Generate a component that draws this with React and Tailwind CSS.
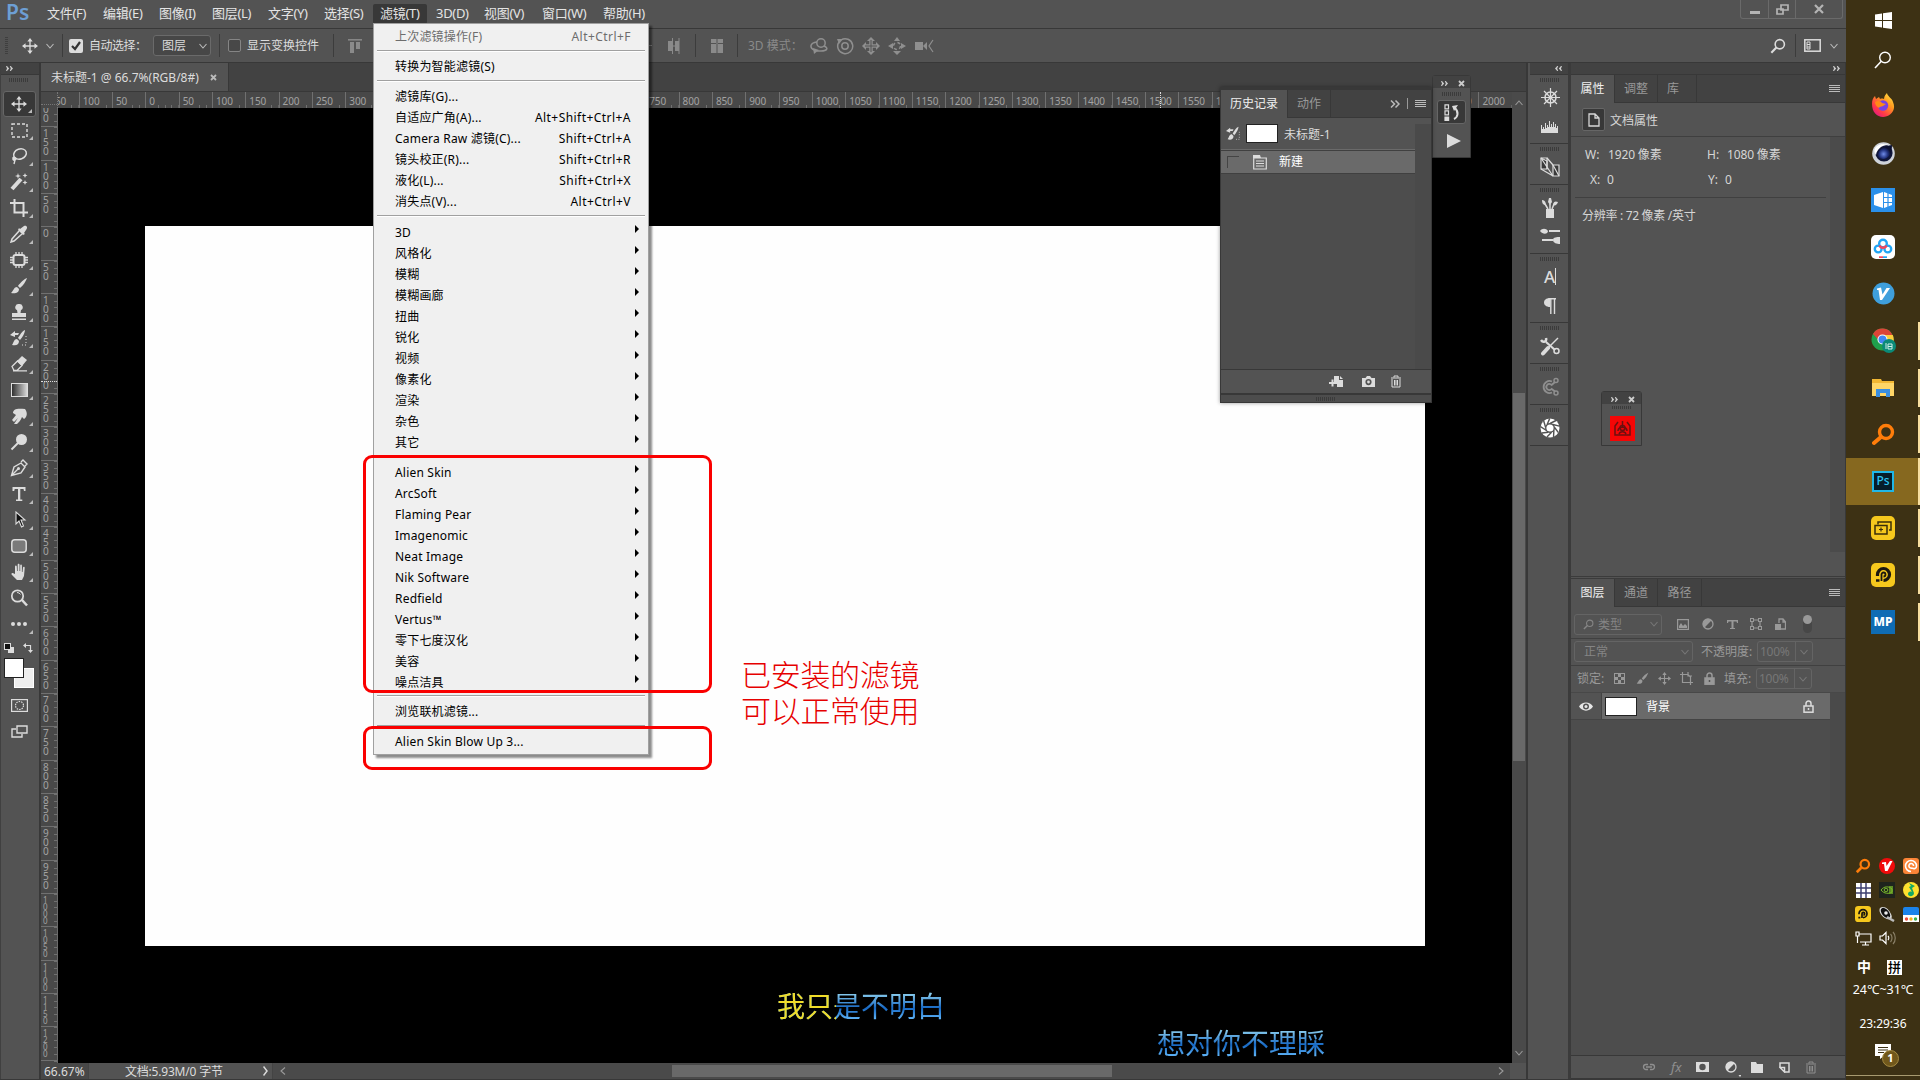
import React from "react";

const Svg = ({ s = 18, w, h, vb, className = "", children }) => (
  <svg
    width={w || s}
    height={h || s}
    viewBox={vb || `0 0 ${w || s} ${h || s}`}
    className={"shrink-0 " + className}
    fill="none"
    stroke="currentColor"
    strokeWidth="1.5"
  >
    {children}
  </svg>
);

const F = { fill: "currentColor", stroke: "none" };

const Move = ({ s = 18 }) => (
  <Svg s={s} vb="0 0 18 18">
    <path d="M9 2v14M2 9h14" />
    <path {...F} d="M9 0l3 4H6zM9 18l3-4H6zM0 9l4-3v6zM18 9l-4-3v6z" />
  </Svg>
);
const Chev = ({ className = "" }) => (
  <Svg w={8} h={6} className={className}>
    <path d="M.5 1l3.500 4L7.500 1" strokeWidth="1.1" />
  </Svg>
);
const Arrows = ({ flip }) => (
  <Svg w={7} h={5} className={flip ? "rotate-180" : ""}>
    <path {...F} d="M0 0h1l2.200 2.500L1 5H0l1-2.500zM3.800 0h1L7 2.500 4.800 5h-1l1-2.500z" />
  </Svg>
);
const Double = () => (
  <Svg w={10} h={8}>
    <path d="M1 .5L4.500 4 1 7.500M5.500 .5L9 4 5.500 7.500" strokeWidth="1.5" />
  </Svg>
);
const Grip = ({ className = "" }) => (
  <div className={"h-1 w-5 bg-[repeating-linear-gradient(90deg,#3b3b3b_0_1px,transparent_1px_2px)] " + className} />
);
const Burger = () => (
  <Svg w={11} h={9}>
    <path d="M0 1.500h11M0 3.500h11M0 5.500h11M0 7.500h11" strokeWidth="1" />
  </Svg>
);
const Brush = ({ s = 18 }) => (
  <Svg s={s} vb="0 0 18 18">
    <path {...F} d="M17 1c-3 1-7 5-9 8l2 2c3-2 6-7 7-10zM7 10c-3 0-3 3-6 6 4 1 8 0 8-4z" />
  </Svg>
);
const HistBrush = ({ s = 18 }) => (
  <Svg s={s} vb="0 0 18 18">
    <path {...F} d="M15 1c-3 1-5 5-7 8l2 2c2-2 5-7 5-10zM7 10c-3 0-3 3-5 6 4 1 7 0 7-4z" />
    <path {...F} d="M0 6l5-4v2l4 0-1 2H5v2z" />
    <path d="M16 7v9h-5" strokeDasharray="1 2" strokeWidth="1" />
  </Svg>
);
const Lens = ({ s = 18, sw = 1.8 }) => (
  <Svg s={s} vb="0 0 18 18">
    <circle cx="11" cy="7" r="5.2" strokeWidth={sw} />
    <path d="M7.2 10.8L1.5 16.5" strokeWidth={sw + 0.6} />
  </Svg>
);
const Trash = () => (
  <Svg w={12} h={13}>
    <path d="M1 3h10M4 2.500V1h4v1.500M2 4v8h8V4M4.500 5v5.500M6 5v5.500M7.500 5v5.500" strokeWidth="1" />
  </Svg>
);
const Lock = ({ filled }) => (
  <Svg w={11} h={13}>
    <path d="M3 6V3.500a2.500 2.500 0 0 1 5 0V6" />
    <rect x="1" y="6" width="9" height="6.200" fill={filled ? "currentColor" : "none"} />
    <path d="M5.500 8v2" stroke={filled ? "#535353" : "currentColor"} />
  </Svg>
);

const tools = [
  <Move s={16} />,
  <Svg w={17} h={15}><rect x="1" y="1" width="15" height="13" strokeDasharray="3 2" strokeWidth="1.400" /></Svg>,
  <Svg s={18}><ellipse cx="10" cy="7" rx="6.500" ry="5" transform="rotate(-20 10 7)" /><path d="M4 10c-2 1-1 4 1 3s0-3-1-2c1 2 1 4 0 6" /></Svg>,
  <Svg s={18}><path d="M2 16L11 6" strokeWidth="4" /><path {...F} d="M8 0l.7 2.300L11 3l-2.300.7L8 6l-.7-2.300L5 3l2.300-.7zM15 0l.7 1.800L17.500 2.500l-1.800.7L15 5l-.7-1.800-1.800-.7 1.800-.7zM15 7l.7 1.800 1.800.7-1.800.7-.7 1.800-.7-1.800-1.800-.7 1.800-.7z" /></Svg>,
  <Svg s={18}><path d="M0 4h13.500v10M4.500 0v13.500H18M13.500 14v4" strokeWidth="2" /></Svg>,
  <Svg s={18}><path {...F} d="M10 4l4-3c3-1 4 2 2 4l-2 3 1 1-2 1-5-5 1-2z" /><path d="M9 6l-7 8-1 3 3-1 8-7" /></Svg>,
  <Svg s={18}><rect x="3.500" y="4" width="11" height="10" rx="2" strokeWidth="2" /><path d="M6 1v3M9 1v3M12 1v3M6 14v3M9 14v3M12 14v3M0 6.500h3M0 9h3M0 11.500h3M15 6.500h3M15 9h3M15 11.500h3" strokeWidth="1.300" /></Svg>,
  <Brush />,
  <Svg s={18}><path {...F} d="M9 1a3.200 3.200 0 0 1 2 6l-.5 3H16v4H2v-4h5.500L7 7a3.200 3.200 0 0 1 2-6zM2 15.500h14V17H2z" /></Svg>,
  <HistBrush />,
  <Svg s={18}><path {...F} d="M7 6l5-5 5 4-5 6z" /><path d="M2 11.500L7.500 6l4.500 4.500-5 5H4z M3 15.800h14" strokeWidth="1.300" /></Svg>,
  <svg width="17" height="14" viewBox="0 0 17 14"><defs><linearGradient id="gt"><stop stopColor="#2a2a2a" /><stop offset="1" stopColor="#ddd" /></linearGradient></defs><rect x=".5" y=".5" width="16" height="13" fill="url(#gt)" stroke="#ddd" /></svg>,
  <Svg s={18}><path {...F} d="M3 6c0-4 4-5 12-4 3 4 2 8-1 10l-2-2c-1 3-3 5-5 7l-3 0 4-6-4 4-2-2 4-5z" /></Svg>,
  <Svg s={18}><circle cx="11.500" cy="6.500" r="5.500" {...F} /><path d="M8 10l-6.500 6.500" strokeWidth="2" /></Svg>,
  <Svg s={18}><path d="M1.500 16.500L4 8l7-4 4 4-4 6zM2 16l6-6M11 3l2-2 4 4-2 2" strokeWidth="1.400" /><circle cx="8.500" cy="9.500" r="1.500" {...F} /></Svg>,
  <Svg s={18}><path {...F} d="M2.500 2h13v4h-1.500l-.5-2h-3.200v10.500h2V16H6v-1.500h2V4H4.700l-.5 2H2.500z" /></Svg>,
  <Svg s={18}><path d="M6 1v12l3-3 2.500 6 2-1L11 9h4z" fill="#111" strokeWidth="1.100" /></Svg>,
  <Svg w={16} h={14}><rect x=".8" y=".8" width="14.400" height="12.400" rx="3" fill="#7a7a7a" /></Svg>,
  <Svg s={18}><path {...F} d="M5 11V3.500c0-1.300 1.700-1.300 1.800 0L7 8h.7V1.800c0-1.400 1.800-1.400 1.800 0V8h.7V2.500c0-1.300 1.700-1.300 1.700 0V9h.6l.5-4.500c.2-1.200 1.700-1 1.700.2L14 13l-2 4H7l-5-5c-1.500-1.500.3-2.600 1.300-1.800z" /></Svg>,
  <Svg s={18}><circle cx="7.500" cy="7" r="5.700" strokeWidth="1.700" /><path d="M12 11l5 5.500" strokeWidth="2.500" /><path d="M7 3.500a4 4 0 0 1 3.500 2" strokeWidth="1" /></Svg>,
  <Svg w={16} h={4}><circle cx="2" cy="2" r="2" {...F} /><circle cx="8" cy="2" r="2" {...F} /><circle cx="14" cy="2" r="2" {...F} /></Svg>,
];

const menus = [
  ["文件(F)", "w-14"], ["编辑(E)", "w-14"], ["图像(I)", "w-[53px]"], ["图层(L)", "w-14"],
  ["文字(Y)", "w-14"], ["选择(S)", "w-14"], ["滤镜(T)", "w-14"], ["3D(D)", "w-12"],
  ["视图(V)", "w-[58px]"], ["窗口(W)", "w-[61px]"], ["帮助(H)", "w-14"],
];

const MenuItem = ({ label, keys, arrow, dim }) => (
  <div className={"flex h-[21px] items-center pl-[21px] pr-[9px] tracking-[0.2px] " + (arrow ? "pt-[2px] " : "") + (dim ? "text-[#6d6d6d]" : "text-black")}>
    <span className="flex-1 whitespace-nowrap">{label}</span>
    {keys && <span className="mr-[8px] whitespace-nowrap tracking-[0.45px]">{keys}</span>}
    {arrow && <svg width="4" height="8" className="mb-[8px]"><path d="M0 0l4 4-4 4z" fill="#000" /></svg>}
  </div>
);
const Sep = () => (
  <div className="h-[9px] px-[3px] pt-[3px]">
    <div className="h-[2px] border-t border-[#a0a0a0] bg-white" />
  </div>
);

const FilterMenu = () => (
  <div className="absolute left-[373px] top-[23px] h-[732px] w-[276px] border border-[#a0a0a0] bg-[#f0f0f0] py-[2px] text-[12px] shadow-[3px_3px_2px_rgba(0,0,0,0.45)]">
    <MenuItem label="上次滤镜操作(F)" keys="Alt+Ctrl+F" dim />
    <Sep />
    <MenuItem label="转换为智能滤镜(S)" />
    <Sep />
    <MenuItem label="滤镜库(G)..." />
    <MenuItem label="自适应广角(A)..." keys="Alt+Shift+Ctrl+A" />
    <MenuItem label="Camera Raw 滤镜(C)..." keys="Shift+Ctrl+A" />
    <MenuItem label="镜头校正(R)..." keys="Shift+Ctrl+R" />
    <MenuItem label="液化(L)..." keys="Shift+Ctrl+X" />
    <MenuItem label="消失点(V)..." keys="Alt+Ctrl+V" />
    <Sep />
    {["3D", "风格化", "模糊", "模糊画廊", "扭曲", "锐化", "视频", "像素化", "渲染", "杂色", "其它"].map((t) => (
      <MenuItem key={t} label={t} arrow />
    ))}
    <Sep />
    {["Alien Skin", "ArcSoft", "Flaming Pear", "Imagenomic", "Neat Image", "Nik Software", "Redfield", "Vertus™", "零下七度汉化", "美容", "噪点洁具"].map((t) => (
      <MenuItem key={t} label={t} arrow />
    ))}
    <Sep />
    <MenuItem label="浏览联机滤镜..." />
    <Sep />
    <MenuItem label="Alien Skin Blow Up 3..." />
  </div>
);

const VSep = ({ className = "" }) => <div className={"h-[23px] w-px bg-[#3c3c3c] " + className} />;

const OptionsBar = () => (
  <div className="flex h-[34px] items-center border-b border-[#383838] text-[12px] text-[#dcdcdc]">
    <div className="ml-[5px] h-[18px] w-[3px] bg-[repeating-linear-gradient(180deg,#3f3f3f_0_1px,transparent_1px_2px)]" />
    <div className="ml-[14px] flex w-[17px]"><Move s={16} /></div>
    <Chev className="ml-[7px] text-[#bbb]" />
    <VSep className="ml-[8px]" />
    <div className="ml-[6px] flex h-[14px] w-[14px] items-center justify-center rounded-[2px] bg-[#dcdcdc] text-[#333]">
      <Svg s={10}><path d="M1 5l3 3 5-7" strokeWidth="2.200" /></Svg>
    </div>
    <span className="ml-[6px] w-[64px] whitespace-nowrap tracking-[-0.5px]">自动选择：</span>
    <div className="flex h-[21px] w-[58px] items-center justify-between rounded-[3px] border border-[#6a6a6a] bg-[#474747] pl-2 pr-[3px]">
      图层 <Chev className="text-[#bbb]" />
    </div>
    <VSep className="ml-[8px]" />
    <div className="ml-[8px] h-[13px] w-[13px] rounded-[2px] border border-[#858585] bg-[#484848]" />
    <span className="ml-[6px] w-[73px] whitespace-nowrap">显示变换控件</span>
    <VSep className="ml-[13px]" />
    <Svg s={14} className="ml-[14px] text-[#8a8a8a]"><path d="M0 .8h14" /><path {...F} d="M2 3h4v11H2zM8 3h4v7H8z" /></Svg>
    <div className="ml-[286px] flex w-[20px] text-[#8a8a8a]"><span className="h-px w-1 bg-[#8a8a8a]" /></div>
    <Svg w={12} h={16} className="text-[#8a8a8a]"><path {...F} d="M0 3h4v10H0zM7 3h4v10H7z" /><path d="M5 8h2M4.500 0v16M11 0v16" strokeWidth="1" /></Svg>
    <VSep className="ml-[15px]" />
    <Svg w={12} h={14} className="ml-[15px] text-[#8a8a8a]"><path {...F} d="M0 0h5v4H0zM0 5h5v9H0zM7 0h5v4H7zM7 5h5v9H7z" /><path d="M6 0v14" strokeWidth="1" /></Svg>
    <VSep className="ml-[14px]" />
    <span className="ml-[10px] w-[62px] whitespace-nowrap text-[#8a8a8a]">3D 模式：</span>
    <div className="flex gap-[8px] text-[#8f8f8f]">
      <Svg s={18}><circle cx="11" cy="6" r="4.200" /><path d="M7 5c-8 1-7 6-3 8M14 9c5 2 3 5-3 5H7" /><path {...F} d="M3 11l6 2-5 4z" /></Svg>
      <Svg s={18}><circle cx="9" cy="9" r="3.200" /><path d="M5 3a7.500 7.500 0 1 1-2 2" /><path {...F} d="M1 2l6 0-4 5z" /></Svg>
      <Svg s={18}><path d="M9 2v14M2 9h14" strokeWidth="3.500" /><path {...F} d="M9 0l4 4H5zM9 18l4-4H5zM0 9l4-4v8zM18 9l-4-4v8z" /><path d="M9 3v12M3 9h12" stroke="#535353" strokeWidth="1" /></Svg>
      <Svg s={18}><circle cx="9" cy="9" r="3.500" strokeDasharray="3 2.500" /><path {...F} d="M9 0l3 4H6zM9 18l4-4H5zM0 9l5-3v6zM18 9l-5-3v6z" /></Svg>
      <Svg w={20} h={18}><path {...F} d="M1 5h8v8H1zM9 9l4-4v8z" /><path d="M19 3l-4 6 4 6" strokeWidth="1.200" /></Svg>
    </div>
    <div className="flex-1" />
    <div className="flex items-center pr-[8px] text-[#dcdcdc]">
      <Lens s={16} />
      <VSep className="ml-[9px]" />
      <Svg w={17} h={13} className="ml-[8px]"><rect x=".8" y=".8" width="15.400" height="11.400" /><path d="M6 3v7H3V3zM3 5.500h3M3 8h3" strokeWidth="1" /></Svg>
      <Chev className="ml-[9px] text-[#bbb]" />
    </div>
  </div>
);

const hLabels = Array.from({ length: 44 }, (_, i) => Math.abs(i * 50 - 150));
const vLabels = Array.from({ length: 30 }, (_, i) => Math.abs(i * 50 - 200));

const Doc = () => (
  <div className="flex w-[1489px] flex-col border-l-2 border-r-2 border-[#383838]">
    <div className="flex h-[29px] border-b border-[#383838] bg-[#424242]">
      <div className="flex w-[188px] items-center border-r border-[#383838] bg-[#535353] pl-[10px] text-[12px] text-[#dcdcdc]">
        <span className="w-[154px] whitespace-nowrap pt-[1px]">未标题-1 @ 66.7%(RGB/8#)</span>
        <Svg s={7} className="ml-[5px] text-[#bbb]"><path d="M1 1l5 5M6 1L1 6" strokeWidth="1.800" /></Svg>
      </div>
    </div>
    <div className="flex min-h-0 flex-1">
      <div className="flex w-[1471px] flex-col">
        <div className="flex h-4 bg-[#484848]">
          <div className="w-[17px] shrink-0 border-r border-dotted border-[#777]">
            <div className="mt-3 border-t border-dotted border-[#777]" />
          </div>
          <div className="relative flex flex-1 overflow-hidden">
            <div className="-ml-[12.700px] flex">
              {hLabels.map((n, i) => (
                <div key={i} className="flex h-4 w-[33.333px] shrink-0 items-end border-l border-[#707070] bg-[repeating-linear-gradient(90deg,transparent_0_5.667px,#707070_5.667px_6.667px)] bg-[length:100%_3px] bg-bottom bg-no-repeat">
                  <span className="ml-[3px] bg-[#484848] pr-[1px] text-[10px] leading-[13px] tracking-[-0.1px] text-[#a2a2a2]">{n}</span>
                </div>
              ))}
            </div>
            <div className="absolute left-[1102px] top-0 h-4 border-l border-dotted border-[#ddd]" />
          </div>
        </div>
        <div className="flex min-h-0 flex-1">
          <div className="relative w-[17px] shrink-0 overflow-hidden border-r border-[#6a6a6a] bg-[#484848]">
            <div className="-mt-[15px]">
              {vLabels.map((n, i) => (
                <div key={i} className="flex h-[33.333px] justify-between border-t border-[#707070]">
                  <div className={n > 999
                    ? "flex flex-col pl-[2px] pt-[2px] text-[8px] leading-[7px] text-[#a2a2a2]"
                    : "flex flex-col pl-[2px] pt-[2px] text-[10px] leading-[9px] text-[#a2a2a2]"}>
                    {String(n).split("").map((c, k) => <span key={k}>{c}</span>)}
                  </div>
                  <div className="h-full w-[3px] bg-[repeating-linear-gradient(180deg,#707070_0_1px,transparent_1px_6.667px)]" />
                </div>
              ))}
            </div>
            <div className="absolute left-0 top-[273px] w-4 border-t border-dotted border-[#ddd]" />
          </div>
          <div className="min-w-0 flex-1 bg-black pl-[87px] pt-[118px]">
            <div className="h-[720px] w-[1280px] bg-[#fefefe]" />
          </div>
        </div>
      </div>
      <div className="flex w-4 flex-col items-center bg-[#4a4a4a] text-[#999]">
        <Chev className="ml-[1px] mt-[8px] rotate-180" />
        <div className="mt-[287px] h-[368px] w-3 bg-[#696969]" />
        <div className="flex-1" />
        <Chev className="mb-[7px] ml-[1px]" />
      </div>
    </div>
    <div className="flex h-4 items-center bg-[#535353] text-[12px] leading-[15px] text-[#dcdcdc]">
      <div className="flex h-4 w-[48px] items-center border-r border-[#444] bg-[#484848] pl-[3px] text-[12px]">66.67%</div>
      <div className="flex h-4 w-[184px] items-center border-r border-[#444] pl-[36px]">
        <span className="flex-1 whitespace-nowrap tracking-[-0.2px]">文档:5.93M/0 字节</span>
        <Svg w={5} h={10} className="mr-[4px]"><path d="M.5.5L4 5 .5 9.500" /></Svg>
      </div>
      <div className="flex h-4 flex-1 items-center bg-[#4a4a4a] text-[#999]">
        <Chev className="ml-[6px] rotate-90" />
        <div className="ml-[385px] h-3 w-[440px] bg-[#696969]" />
        <div className="flex-1" />
        <Chev className="mr-[5px] -rotate-90" />
        <div className="h-4 w-4 bg-[#535353]" />
      </div>
    </div>
  </div>
);

const sideGroups = [
  ["h-[69px]", [
    <Svg s={19}><circle cx="9.500" cy="9.500" r="5.500" /><circle cx="9.500" cy="9.500" r="1.800" {...F} /><path d="M9.500 0v19M0 9.500h19M3 3l13 13M16 3L3 16" strokeWidth="1.200" /></Svg>,
    <Svg w={18} h={12}><path {...F} d="M0 12V4h1v4h1V6h1v2h1V2h1v5h1V4h1v2h1V0h1v6h1V3h1v3h1V1h1v5h1V3h1v4h1V5h1v7z" /></Svg>]],
  ["h-[41px]", [
    <Svg s={20}><path fill="#3a3a3a" d="M1 1h6v11H1zM13 8h6v11h-6z" strokeWidth="1.200" /><path d="M1 1l12 18M7 1l6 7M1 12l12 7M13 8l6 11M1 1l6 3v8" strokeWidth="1.200" /></Svg>]],
  ["h-[69px]", [
    <Svg s={20}><path {...F} d="M6 11h8v9H6zM2 2c3 0 4 3 4 5C3 7 2 5 2 2zM9 0h2l1 4-2 3-2-3zM13 6c1-3 3-3 5-2-1 3-3 4-5 3z" /><path d="M5 6l3 5M10 6v5M14 6l-2 5" /></Svg>,
    <Svg w={20} h={17}><path {...F} d="M0 3c2-3 6-3 8 0 0 3-5 4-8 0zM20 9v7c-3 0-7-1-7-4s4-3 7-3z" /><path d="M9 3h11M2 12h11" strokeWidth="2" /></Svg>]],
  ["h-[69px]", [
    <div className="flex items-center text-[17px] font-medium leading-none"><span>A</span><span className="h-[17px] w-px bg-[#ddd]" /></div>,
    <Svg w={12} h={16}><path {...F} d="M6 0h6v1.500H6zM6 0v9C-2 9-2 0 6 0z" /><path d="M6.800 0v16M10.500 0v16" strokeWidth="1.400" /></Svg>]],
  ["h-[41px]", [
    <Svg s={20}><path d="M18 2L8 12" /><path d="M8 12l-5 5.500" strokeWidth="4" strokeLinecap="round" /><path d="M6 6l9 8" strokeWidth="2.200" /><path d="M1 4c2 3 6 2 5-2" strokeWidth="2.500" /><circle cx="16.500" cy="15" r="2.500" /></Svg>]],
  ["h-[41px]", [
    <Svg s={19} className="text-[#8f8f8f]"><path d="M11 4.500A6 6 0 1 0 11 15.500M10 7.500a3 3 0 1 0 0 5M10 8.500l4-3.500M10 11.500l4 3" strokeWidth="1.800" /><circle cx="15" cy="3.500" r="2" /><circle cx="15" cy="16" r="2" /></Svg>]],
  ["h-[41px]", [
    <Svg s={20} className="text-white">
      <circle cx="10" cy="10" r="9.500" {...F} />
      <g stroke="#535353" strokeWidth="1.400">
        {[0, 40, 80, 120, 160, 200, 240, 280, 320].map((a) => <path key={a} d="M10 5.500L16 2.500" transform={`rotate(${a} 10 10)`} />)}
        <circle cx="10" cy="10" r="4.300" />
      </g>
    </Svg>]],
];

const SideIcons = () => (
  <div className="flex w-[41px] flex-col border-r-[3px] border-[#3b3b3b] bg-[#535353] text-[#dcdcdc]">
    <div className="flex h-3 items-center justify-end border-b border-[#383838] bg-[#424242] pr-[6px] text-[#ccc]"><Arrows flip /></div>
    {sideGroups.map(([h, icons], i) => (
      <div key={i} className={"flex flex-col items-center border-b border-[#383838] pl-[2px] " + h}>
        <Grip className="mt-[3px] mb-[1px] shrink-0" />
        {icons.map((ic, k) => <div key={k} className="flex h-[29px] shrink-0 items-center justify-center">{ic}</div>)}
      </div>
    ))}
  </div>
);

const Tab = ({ active, w, children }) => (
  <div className={"flex items-center justify-center border-r border-[#383838] text-[12px] " + w + (active ? " bg-[#535353] text-[#f0f0f0]" : " border-b text-[#999]")}>{children}</div>
);

const Field = ({ w, children }) => (
  <div className={"flex h-[21px] items-center rounded-[3px] border border-[#646464] text-[#858585] " + w}>{children}</div>
);
const Percent = () => (
  <Field w="w-[56px]">
    <span className="w-[38px] border-r border-[#646464] pl-[2px] leading-[19px] text-[#777] tracking-[-0.3px]">100%</span>
    <Chev className="ml-[4px] text-[#777]" />
  </Field>
);

const Panels = () => (
  <div className="flex w-[275px] flex-col border-r border-[#383838] bg-[#535353] text-[12px] text-[#d6d6d6]">
    <div className="flex h-3 items-center justify-end border-b border-[#383838] bg-[#424242] pr-[5px] text-[#ccc]"><Arrows /></div>
    <div className="flex h-7 bg-[#424242]">
      <Tab active w="w-[44px]">属性</Tab><Tab w="w-[43px]">调整</Tab><Tab w="w-[39px] pr-2">库</Tab>
      <div className="flex flex-1 items-center justify-end border-b border-[#383838] pr-[5px] text-[#bbb]"><Burger /></div>
    </div>
    <div className="flex h-[34px] items-center border-b border-[#3f3f3f] pl-[11px]">
      <div className="flex h-[23px] w-[23px] items-center justify-center rounded-[2px] border border-[#666] bg-[#383838]">
        <Svg w={12} h={14}><path d="M1 1h6l4 4v8H1zM7 1v4h4" strokeWidth="1.300" /></Svg>
      </div>
      <span className="ml-[5px] pt-[3px]">文档属性</span>
    </div>
    <div className="flex h-[439px]">
      <div className="w-[259px] pl-[4px]">
        <div className="flex h-[61px] w-[251px] flex-col border-b border-[#404040] pt-[5px]">
          <div className="flex h-[25px] items-center pl-[10px]"><span className="w-[23px]">W:</span><span className="w-[99px] tracking-[-0.15px]">1920 像素</span><span className="w-[20px]">H:</span><span className="tracking-[-0.15px]">1080 像素</span></div>
          <div className="flex h-[25px] items-center pl-[15px]"><span className="w-[17px]">X:</span><span className="w-[101px]">0</span><span className="w-[17px]">Y:</span><span>0</span></div>
        </div>
        <div className="pl-[7px] pt-[9px] tracking-[-0.3px]">分辨率 : 72 像素 /英寸</div>
      </div>
      <div className="h-[415px] flex-1 bg-[#4b4b4b]" />
    </div>
    <div className="h-[3px] border-y border-[#3b3b3b]" />
    <div className="flex h-7 bg-[#424242]">
      <Tab active w="w-[44px]">图层</Tab><Tab w="w-[43px]">通道</Tab><Tab w="w-[44px]">路径</Tab>
      <div className="flex flex-1 items-center justify-end border-b border-[#383838] pr-[5px] text-[#bbb]"><Burger /></div>
    </div>
    <div className="flex h-8 items-center border-b border-[#404040] pl-[3px] pt-[3px] text-[#999]">
      <Field w="w-[88px]">
        <span className="flex w-full items-center pl-2"><Lens s={11} /><span className="ml-1 flex-1 pt-[1px]">类型</span><Chev className="mr-[3px] text-[#777]" /></span>
      </Field>
      <div className="ml-[15px] flex items-center">
        <div className="w-[25px]"><Svg w={12} h={11}><rect x=".6" y=".6" width="10.800" height="9.800" strokeWidth="1.200" /><path {...F} d="M2 9V7l2-3 2 3 2-2 2 2v2z" /></Svg></div>
        <div className="w-[25px]"><Svg s={12}><circle cx="6" cy="6" r="5" strokeWidth="1.300" /><path {...F} d="M9.700 2.300a5 5 0 0 0-7.400 7.400z" /></Svg></div>
        <div className="w-[23px]"><Svg w={11} h={11}><path {...F} d="M0 1h11v3h-1L9.500 2.500h-3v6.500H8V10H3V9h1.500V2.500h-3L1 4H0z" /></Svg></div>
        <div className="w-[25px]"><Svg s={12}><path d="M2 2h8v8H2z" strokeWidth="1.200" /><path {...F} d="M0 0h4v4H0zM8 0h4v4H8zM0 8h4v4H0zM8 8h4v4H8z" /><path fill="#535353" stroke="none" d="M1 1h2v2H1zM9 1h2v2H9zM1 9h2v2H1zM9 9h2v2H9z" /></Svg></div>
        <div className="w-[28px]"><Svg w={11} h={12}><path d="M4 5V1h4l2.500 3v7H6M8 1v3h3" strokeWidth="1.300" /><path {...F} d="M0 6h6v6H0z" /></Svg></div>
        <div className="h-[18px] w-[9px] rounded-full bg-[#474747]"><div className="h-[9px] w-[9px] rounded-full bg-[#999]" /></div>
      </div>
    </div>
    <div className="flex h-[27px] items-center border-b border-[#404040] pb-[1px] pl-[3px] text-[#999]">
      <Field w="w-[119px]"><span className="flex-1 pl-[9px] pt-[1px]">正常</span><Chev className="mr-[3px] text-[#777]" /></Field>
      <span className="ml-[8px] w-[56px] whitespace-nowrap pt-[1px]">不透明度:</span>
      <Percent />
    </div>
    <div className="flex h-[27px] items-center border-b border-[#484848] pb-[1px] pl-[6px] text-[#999]">
      <span className="w-[37px]">锁定:</span>
      <div className="w-[22px]"><Svg s={11}><rect x=".5" y=".5" width="10" height="10" strokeWidth="1" /><path {...F} d="M4 1h3v3H4zM1 4h3v3H1zM7 4h3v3H7zM4 7h3v3H4z" /></Svg></div>
      <div className="w-[22px]"><Brush s={13} /></div>
      <div className="w-[22px]"><Move s={13} /></div>
      <div className="w-[24px]"><Svg s={13}><path d="M0 2.500h8l2.500 2.500V13M2.500 0v10.500H13M8 0v4h4" strokeWidth="1.200" /></Svg></div>
      <div className="w-[20px]"><Lock filled /></div>
      <span className="w-[32px] whitespace-nowrap">填充:</span>
      <Percent />
    </div>
    <div className="flex min-h-0 flex-1">
      <div className="w-[259px] bg-[#4d4d4d]">
        <div className="flex h-[27px] border-b border-[#444] bg-[#6a6a6a]">
          <div className="flex w-[31px] items-center justify-center border-r border-[#444] bg-[#535353] text-[#e6e6e6]">
            <Svg w={14} h={9}><path {...F} fillRule="evenodd" d="M0 4.500C3-1 11-1 14 4.500 11 10 3 10 0 4.500zM7 1.500a3 3 0 1 0 0 6 3 3 0 0 0 0-6z" /><circle cx="7" cy="4.500" r="1.500" {...F} /></Svg>
          </div>
          <div className="flex flex-1 items-center pl-[3px] pr-[16px] text-white">
            <div className="h-[19px] w-8 border border-[#222] bg-white" />
            <span className="ml-[9px] flex-1 pt-[2px]">背景</span>
            <span className="text-[#dcdcdc]"><Lock /></span>
          </div>
        </div>
      </div>
      <div className="flex-1 bg-[#4a4a4a]" />
    </div>
    <div className="flex h-6 items-center border-y border-[#383838] pl-[71px] text-[#dcdcdc]">
      <div className="flex w-[29px] text-[#8f8f8f]"><Svg w={14} h={8}><path d="M6 1.500H4a2.500 2.500 0 0 0 0 5h2M8 1.500h2a2.500 2.500 0 0 1 0 5H8M4 4h6" strokeWidth="1.300" /></Svg></div>
      <div className="w-[25px] text-[13px] italic leading-none text-[#8f8f8f]">fx</div>
      <div className="flex w-[29px]"><Svg w={13} h={10}><path {...F} fillRule="evenodd" d="M0 0h13v10H0zM6.500 1.800a3.200 3.200 0 1 0 0 6.400 3.200 3.200 0 0 0 0-6.400z" /></Svg></div>
      <div className="flex w-[26px]"><Svg w={16} h={20} className="-mr-1"><circle cx="6" cy="10" r="5" strokeWidth="1.300" /><path {...F} d="M9.700 6.300a5 5 0 0 0-7.400 7.400zM13.500 18h3l-1.500 2z" /></Svg></div>
      <div className="flex w-[28px]"><Svg w={12} h={11}><path {...F} d="M0 0h5l1 2h6v9H0z" /></Svg></div>
      <div className="flex w-[26px]"><Svg s={11}><path d="M1 6V1h9v9H6M1 5.500h4.500V10z" strokeWidth="1.500" /></Svg></div>
      <div className="flex text-[#8f8f8f]"><Trash /></div>
    </div>
  </div>
);

const HistoryPanel = () => (
  <div className="absolute left-[1220px] top-[87px] flex h-[316px] w-[212px] flex-col border border-t-[3px] border-[#383838] bg-[#4d4d4d] text-[12px] text-[#dcdcdc] shadow-[0_0_4px_rgba(0,0,0,0.4)]">
    <div className="flex h-7 shrink-0 bg-[#424242]">
      <Tab active w="w-[67px]">历史记录</Tab><Tab w="w-[43px]">动作</Tab>
      <div className="flex flex-1 items-center justify-end gap-[7px] border-b border-[#383838] pr-[5px] text-[#bbb]">
        <Double /><span className="h-[11px] w-px bg-[#999]" /><Burger />
      </div>
    </div>
    <div className="flex min-h-0 flex-1">
      <div className="flex-1">
        <div className="flex h-[32px] items-center border-b border-[#6a6a6a] bg-[#535353] pl-[5px]">
          <HistBrush s={15} />
          <div className="ml-[5px] h-[19px] w-8 border border-[#222] bg-white" />
          <span className="ml-[6px] pt-[2px]">未标题-1</span>
        </div>
        <div className="flex h-[24px] items-center border-y border-[#404040] bg-[#6a6a6a] pl-[6px] text-white">
          <div className="h-3 w-3 border-l border-t border-[#444]" />
          <Svg w={14} h={15} className="ml-[14px] text-[#dcdcdc]"><path d="M.7 3h12.600v11H.7zM3 6h8M3 8.500h8M3 11h8" strokeWidth="1.200" /><path {...F} d="M0 0h7l1 3H0z" /></Svg>
          <span className="ml-[12px]">新建</span>
        </div>
      </div>
      <div className="w-4 border-t-[6px] border-[#535353] bg-[#4a4a4a]" />
    </div>
    <div className="flex h-[26px] shrink-0 items-center border-b-2 border-t border-[#383838] bg-[#535353] pl-[108px]">
      <Svg w={14} h={12}><path {...F} d="M5 0h5v4h4v7H8V8H5z" /><path d="M0 7h7M3.500 3.500v7" strokeWidth="2" /><path {...F} d="M11 0l3 3h-3z" /></Svg>
      <Svg w={13} h={11} className="ml-[19px]"><path {...F} fillRule="evenodd" d="M0 2h3.500L5 0h3l1.500 2H13v9H0zM6.500 3a3 3 0 1 0 0 6.200 3 3 0 0 0 0-6.200z" /><circle cx="6.500" cy="6" r="1.400" {...F} /></Svg>
      <span className="ml-[15px]"><Trash /></span>
    </div>
    <div className="flex h-[7px] shrink-0 items-center justify-center bg-[#4d4d4d]"><Grip /></div>
  </div>
);

const MiniDock = () => (
  <div className="absolute left-[1432px] top-[75px] flex h-[83px] w-[39px] flex-col items-center rounded-t-[3px] border border-[#383838] bg-[#535353] text-[#dcdcdc]">
    <div className="flex h-3 w-full shrink-0 items-center justify-between bg-[#424242] pl-[8px] pr-[5px] pt-[2px] text-[#ccc]">
      <Arrows /><Svg s={7}><path d="M1 1l5 5M6 1L1 6" strokeWidth="1.800" /></Svg>
    </div>
    <Grip className="mt-1" />
    <div className="mt-[4px] flex h-6 w-[29px] items-center justify-center rounded-[3px] border border-[#666] bg-[#383838]">
      <Svg w={16} h={17}><path d="M1 .8h3.500v4H1zM1 6.800h3.500v4H1z" strokeWidth="1.200" /><path {...F} d="M.4 12.500H5.200V17H.4z" /><path d="M10 15c4-2 5-7 1-11" strokeWidth="2" /><path {...F} d="M8 2l6-1-4 6z" /></Svg>
    </div>
    <Svg w={14} h={14} className="ml-1 mt-[10px]"><path {...F} d="M0 0l14 7-14 7z" /></Svg>
  </div>
);

const RedDock = () => (
  <div className="absolute left-[1601px] top-[391px] flex h-[55px] w-[41px] flex-col items-center rounded-t-[3px] border border-[#383838] bg-[#535353]">
    <div className="flex h-3 w-full items-center justify-between bg-[#424242] pl-[9px] pr-[6px] pt-[2px] text-[#ccc]">
      <Arrows /><Svg s={7}><path d="M1 1l5 5M6 1L1 6" strokeWidth="1.800" /></Svg>
    </div>
    <div className="mt-[2px] h-[3px] w-5 bg-[repeating-linear-gradient(90deg,#3b3b3b_0_1px,transparent_1px_2px)]" />
    <div className="ml-[1px] mt-[7px] flex h-[25px] w-[25px] items-center justify-center bg-[#f40606] text-[#6a1010]">
      <Svg s={19}><path d="M5 3L2 7v9h15V7l-3-4M9.500 2v6M5 12c0-5 9-5 9 0M6 15c1-3 6-3 7 0" /><circle cx="9.500" cy="9" r="2.500" /></Svg>
    </div>
  </div>
);

const Sq = ({ bg, children }) => <div className={"flex h-6 w-6 items-center justify-center " + bg}>{children}</div>;

const apps = [
  <Svg s={17} className="text-white"><path {...F} d="M0 2.500L7 1.500V8H0zM8 1.300L17 0v8H8zM0 9h7v6.500L0 14.500zM8 9h9v8l-9-1.300z" /></Svg>,
  <span className="text-white"><Svg s={18}><circle cx="11" cy="6.500" r="5.300" strokeWidth="1.400" /><path d="M7.300 10.300L1 17" strokeWidth="1.600" /></Svg></span>,
  <svg width="24" height="24" viewBox="0 0 24 24"><defs><linearGradient id="ff" x1="1" y1="0" x2=".2" y2="1"><stop stopColor="#fff44f" /><stop offset=".4" stopColor="#ff9a1f" /><stop offset=".75" stopColor="#ff3b47" /><stop offset="1" stopColor="#e31587" /></linearGradient></defs><path d="M1 11C1 7 2 5 4 3l1 3 3-2 1 2c2-1 4 0 4 0 0-3 2-5 3-6 0 3 5 5 6 9 4 9-4 15-10 15S1 19 1 11z" fill="url(#ff)" /><circle cx="12" cy="12.500" r="5.200" fill="#7542e5" /><path d="M4 9c3-2 6-1 7 1l4 1-3 2c-2 1-3 0-4 2-2-1-4-3-4-6z" fill="#ff8a16" /></svg>,
  <svg width="23" height="23" viewBox="0 0 23 23"><defs><radialGradient id="c4" cx=".4" cy=".65"><stop stopColor="#6f8be8" /><stop offset=".6" stopColor="#22337f" /><stop offset="1" stopColor="#0a0f30" /></radialGradient></defs><circle cx="11.500" cy="11.500" r="11.300" fill="#cfd3da" /><circle cx="12" cy="11" r="8.600" fill="#10163a" /><path d="M6 13c0-6 7-9 14-10 0 8-3 13-8 14-3 0-6-1-6-4z" fill="url(#c4)" /><path d="M3 6c3-4 9-5 13-3-6 0-11 4-12 10-2-2-2-5-1-7z" fill="#fff" /></svg>,
  <Sq bg="bg-[#2b90ea]"><svg width="18" height="16" viewBox="0 0 18 16"><path d="M0 3l9-3v16l-9-3z" fill="#fff" /><path d="M10 0l8 3v10l-8 3z" fill="#fff" /><path d="M10 5.500h8M10 10.500h8M14 0v16" stroke="#2b90ea" strokeWidth="1.200" /></svg></Sq>,
  <div className="flex h-6 w-6 items-center justify-center overflow-hidden rounded-[5px] bg-white"><svg width="20" height="22" viewBox="0 0 20 22" fill="none" strokeWidth="2.400"><circle cx="5.200" cy="13" r="3.400" stroke="#20a5f5" /><circle cx="14.800" cy="13" r="3.400" stroke="#20a5f5" /><circle cx="10" cy="7.500" r="3.800" stroke="#20a5f5" /><path d="M6.500 9.500A3.800 3.800 0 0 0 13.500 9.500" stroke="#f5455c" /><path d="M6 21.500h4" stroke="#f5455c" /><path d="M10 21.500h4" stroke="#20a5f5" /></svg></div>,
  <svg width="23" height="23" viewBox="0 0 23 23"><circle cx="11.500" cy="11.500" r="11" fill="#3f9fdc" /><path d="M5 6.500l4-1 1.500 7 4-6.500h3.500l-8 12H8L6.500 8H5z" fill="#fff" /></svg>,
  <svg width="25" height="25" viewBox="0 0 25 25"><circle cx="11.500" cy="11.500" r="11" fill="#1fa04c" /><path d="M2 6a11 11 0 0 1 19.500 1H11.500l-3 6z" fill="#dc4437" /><path d="M11.500 7h10.300a11 11 0 0 1-9 15.500l3-9z" fill="#fccd3c" /><circle cx="11.500" cy="11.500" r="5" fill="#fff" /><circle cx="11.500" cy="11.500" r="4" fill="#4287f3" /><circle cx="18" cy="18" r="7" fill="#0a8a78" /><path d="M15 15v6M17 16h4v5h-4zM17 18.500h4" stroke="#cfeee8" fill="none" /></svg>,
  <svg width="22" height="19" viewBox="0 0 22 19"><path d="M0 1h9l1 2h12v15H0z" fill="#f2b733" /><path d="M0 5h22v13H0z" fill="#ffd667" /><path d="M4 19v-8h14v8h-4v-4H8v4z" fill="#3a8ee0" /></svg>,
  <span className="text-[#ff7d0a]"><Svg s={23}><circle cx="14" cy="9" r="6.500" strokeWidth="3.400" /><path d="M9 14l-7 6" strokeWidth="4" strokeLinecap="round" /></Svg></span>,
  <div className="flex h-[21px] w-[22px] items-center justify-center border-2 border-[#20b7e8] bg-[#061e2b] text-[12px] font-medium leading-none text-[#2dc4f2]">Ps</div>,
  <Sq bg="rounded-[5px] bg-[#f6c81d] text-[#3a2e0a]"><Svg w={18} h={15}><path d="M4 3.500V1h13v8h-2" strokeWidth="1.500" /><rect x="1" y="4.500" width="12" height="8.500" strokeWidth="1.500" /><path d="M7 6.500v4M5 8.500h4" strokeWidth="1.200" /></Svg></Sq>,
  <Sq bg="rounded-[5px] bg-[#f6c81d] text-[#1b1710]"><Svg s={18}><path d="M3.500 10V8.500a6 6 0 1 1 6 6" strokeWidth="3.200" /><path d="M7.500 15V8.500a2 2 0 1 1 2 2" strokeWidth="1.800" /><path d="M2 14.500h3.500" strokeWidth="2.500" /></Svg></Sq>,
  <Sq bg="bg-[#0f6cb4]"><span className="text-[12px] font-extrabold text-white">MP</span></Sq>,
];
const appHeights = ["h-10", "h-10", "h-[50px]", "h-[46.500px]"];

const Taskbar = () => (
  <div className="flex h-[1080px] w-[74px] flex-col bg-[#3d3114] text-white">
    {apps.map((a, i) => (
      <div key={i} className={"flex w-full shrink-0 items-center " + (appHeights[i] || "h-[46.900px]") + (i === 10 ? " bg-[#86681f]" : "")}>
        <div className="flex flex-1 items-center justify-center pl-[2px]">{a}</div>
        {i > 6 ? <div className={i === 10 ? "h-full w-[2px] bg-[#f8dfa0]" : "h-[38px] w-[2px] bg-[#f8dfa0]"} /> : <div className="w-[2px]" />}
      </div>
    ))}
    <div className="flex-1" />
    <div className="grid shrink-0 grid-cols-[24px_24px_24px] items-center justify-items-center pl-[5px] [grid-auto-rows:24px]">
      <span className="text-[#ff7d0a]"><Svg s={16} vb="0 0 18 18"><circle cx="11" cy="7" r="4.800" strokeWidth="2.500" /><path d="M7 11l-5 5" strokeWidth="3" /></Svg></span>
      <svg width="16" height="16"><circle cx="8" cy="8" r="8" fill="#f00b0b" /><path d="M3 4.500L7 4l.5 4L11 3h2.500L8.500 13H6L5 6H3z" fill="#fff" /></svg>
      <svg width="16" height="16"><rect width="16" height="16" rx="3" fill="#fb8437" /><path d="M8 13.500a5.500 5.500 0 1 1 5.500-5.500c0 3-2.500 3-4.500 2M9 10a2.300 2.300 0 1 1 1.500-2" fill="none" stroke="#fff" strokeWidth="1.600" /></svg>
      <svg width="15" height="15"><path d="M0 0h15v15H0z" fill="#fff" /><path d="M5 0v15M10 0v15M0 5h15M0 10h15" stroke="#3d3f70" strokeWidth="1.500" /></svg>
      <svg width="16" height="16"><rect width="16" height="16" fill="#1f241d" /><path d="M2 8c3-4 8-4 11-1v3c-3 2-8 2-11-2z" fill="none" stroke="#78b82a" /><circle cx="7" cy="8" r="1.800" fill="none" stroke="#78b82a" /><path d="M10 4h4v8h-4z" fill="#78b82a" opacity=".7" /></svg>
      <svg width="16" height="16"><circle cx="8" cy="8" r="8" fill="#ffe12e" /><path d="M6 1l6 3-3 2 2 5c0 4-6 4-6 1 0-2 2-3 4-2L6 5l2-1z" fill="#13a866" /></svg>
      <svg width="16" height="16" viewBox="0 0 24 24"><rect width="24" height="24" rx="5" fill="#f6c81d" /><path d="M6 12.500v-1a6 6 0 1 1 6 6M10.500 18v-6.500a2 2 0 1 1 2 2M5 17.500h3" fill="none" stroke="#1b1710" strokeWidth="2.600" /></svg>
      <svg width="17" height="16"><path d="M1 2c4-3 9 1 11 6 2 4 0 6-4 5C3 11-1 6 1 2z" fill="#ddd" /><ellipse cx="6.500" cy="7" rx="3.500" ry="6" transform="rotate(-40 6.500 7)" fill="#111" /><circle cx="7" cy="7" r="1.800" fill="#eee" /><path d="M8 11l7 4" stroke="#bbb" strokeWidth="2.500" /></svg>
      <svg width="16" height="15"><rect width="16" height="15" rx="2" fill="#1b83ea" /><path d="M0 8h16v7H0z" fill="#fff" /><circle cx="3.500" cy="12" r="1.700" fill="#ef4b3c" /><circle cx="8" cy="12" r="1.700" fill="#f7b21b" /><circle cx="12.500" cy="12" r="1.700" fill="#38b34a" /></svg>
      <Svg w={17} h={15}><path d="M4 3h12v8H5M10.500 11v3M7 14h7M1 1h3v4H1zM2.500 5v7" strokeWidth="1.200" /></Svg>
      <Svg w={17} h={14}><path d="M1 5h2.500L7 1.500v11L3.500 9H1z" strokeWidth="1.200" /><path d="M9 5c1 1 1 3 0 4" strokeWidth="1.200" /><path d="M11.500 3c2 2 2 6 0 8M14 1c3 3 3 9 0 12" stroke="#8a8068" strokeWidth="1.200" /></Svg>
    </div>
    <div className="mt-[6px] flex h-[22px] shrink-0 items-center pl-[11px]">
      <span className="w-[30px] text-[14px] font-bold leading-none">中</span>
      <span className="flex h-[15px] w-[15px] items-center justify-center bg-white text-[13px] font-medium leading-none text-black">拼</span>
    </div>
    <div className="h-[26px] shrink-0 whitespace-nowrap text-center text-[12.500px] leading-[24px]">24℃~31℃</div>
    <div className="mt-[9px] h-[22px] shrink-0 text-center text-[12px] leading-[22px] tracking-[-0.1px]">23:29:36</div>
    <div className="relative mt-[8px] h-[33px] shrink-0 border-b border-[#a89a70] pl-[29px]">
      <Svg w={16} h={15} className="mt-[1px]"><path {...F} d="M0 0h16v12H9l-4 3v-3H0z" /><path d="M3 3.500h10M3 6h10M3 8.500h6" stroke="#3d3114" strokeWidth="1.200" /></Svg>
      <div className="absolute left-[36px] top-[7px] flex h-[17px] w-[17px] items-center justify-center rounded-full border border-[#a48a42] bg-[#71581b] text-[11px] font-bold">1</div>
    </div>
    <div className="h-1 shrink-0" />
  </div>
);

export default function App() {
  return (
    <div className="relative flex h-[1080px] w-[1920px] overflow-hidden bg-[#535353] font-['Noto_Sans','Noto_Sans_CJK_SC',sans-serif]">
      <div className="flex h-[1080px] w-[1846px] flex-col">
        <div className="flex h-[29px] items-center border-b border-[#383838] text-[13px] text-[#e4e4e4]">
          <span className="w-[40px] pb-[3px] pl-[6px] text-[21px] font-semibold leading-none text-[#6d9fd4]">Ps</span>
          {menus.map(([t, w], i) => (
            <div key={t} className={"flex shrink-0 " + w}>
              <span className={"flex h-5 items-center whitespace-nowrap rounded-[2px] px-[7px] tracking-[-0.3px] " + (i === 6 ? "bg-[#383838]" : "")}>{t}</span>
            </div>
          ))}
          <div className="flex-1" />
          <div className="mr-[3px] flex h-[19px] self-start rounded-b-[3px] border border-t-0 border-[#6a6a6a] text-[#b4b4b4]">
            <div className="flex w-7 items-center justify-center border-r border-[#6a6a6a]"><span className="mt-[6px] h-[3px] w-[10px] bg-[#b4b4b4]" /></div>
            <div className="flex w-[27px] items-center justify-center border-r border-[#6a6a6a]"><Svg w={13} h={11}><path d="M5 1h7v5H5zM1 5h6v5H1z" strokeWidth="1.700" /></Svg></div>
            <div className="flex w-[46px] items-center justify-center"><Svg s={10}><path d="M1 1l8 8M9 1L1 9" strokeWidth="2.200" /></Svg></div>
          </div>
        </div>
        <OptionsBar />
        <div className="flex min-h-0 flex-1 border-b border-[#383838]">
          <div className="flex w-[39px] shrink-0 flex-col border-l border-[#404040] text-[#dcdcdc]">
            <div className="flex h-3 shrink-0 items-center border-b border-[#383838] bg-[#424242] pl-[5px] text-[#ccc]"><Arrows /></div>
            <Grip className="ml-2 mt-[3px] shrink-0" />
            <div className="mt-[9px] flex flex-col pl-[2px]">
              {tools.map((t, i) => (
                <div key={i} className={"relative flex h-[26px] w-[33px] items-center justify-center pr-[1px] " + (i === 0 ? "rounded-[3px] border border-[#666] bg-[#383838]" : "")}>
                  {t}
                  {i !== 19 && <svg width="4" height="4" className="absolute bottom-[3px] right-[3px]"><path d="M4 0v4H0z" fill="#bbb" /></svg>}
                </div>
              ))}
            </div>
            <div className="mt-[6px] flex justify-between px-[3px]">
              <Svg s={10}><rect x="4" y="4" width="6" height="6" {...F} /><rect x=".5" y=".5" width="6" height="6" fill="#111" strokeWidth="1" /></Svg>
              <Svg s={10} className="mr-[3px]"><path d="M2 2.500h5.500V8" strokeWidth="1.200" /><path {...F} d="M0 2.500L3 0v5zM7.500 10L5 7h5z" /></Svg>
            </div>
            <div className="relative mt-[5px] h-[30px]">
              <div className="absolute left-[13px] top-[10px] h-5 w-5 border border-white bg-[#eee]" />
              <div className="absolute left-[3px] top-0 h-5 w-5 border border-[#222] bg-white" />
            </div>
            <div className="mt-[11px] flex flex-col items-center gap-[13px] pr-[2px]">
              <Svg w={17} h={13}><rect x=".6" y=".6" width="15.800" height="11.800" strokeWidth="1.200" /><circle cx="8.500" cy="6.500" r="4" strokeDasharray="1.500 1" strokeWidth="1.200" /></Svg>
              <Svg w={17} h={13}><path d="M6 1h10v7H6zM5 4H1v8h10V9" strokeWidth="1.400" /></Svg>
            </div>
          </div>
          <Doc />
          <div className="w-[2px] bg-[#535353]" />
          <SideIcons />
          <Panels />
        </div>
      </div>
      <Taskbar />
      <MiniDock />
      <HistoryPanel />
      <RedDock />
      <FilterMenu />
      <div className="absolute left-[363px] top-[455px] h-[238px] w-[349px] rounded-[9px] border-[3px] border-[#fa0000]" />
      <div className="absolute left-[363px] top-[726px] h-[44px] w-[349px] rounded-[9px] border-[3px] border-[#fa0000]" />
      <div className="absolute left-[741px] top-[657px] whitespace-nowrap text-[30px] font-light leading-[36px] tracking-[-0.3px] text-[#e60000]">已安装的滤镜<br />可以正常使用</div>
      <div className="absolute left-[777px] top-[985px] bg-[linear-gradient(90deg,#f0dc28_0_59px,transparent_59px),linear-gradient(180deg,#8accec_20%,#1668c4_55%,#5cb0f4_80%)] bg-clip-text text-[28px] leading-[42px] text-transparent">我只是不明白</div>
      <div className="absolute left-[1157px] top-[1022px] bg-[linear-gradient(180deg,#8accec_20%,#1668c4_55%,#5cb0f4_80%)] bg-clip-text text-[28px] leading-[42px] text-transparent">想对你不理睬</div>
    </div>
  );
}
